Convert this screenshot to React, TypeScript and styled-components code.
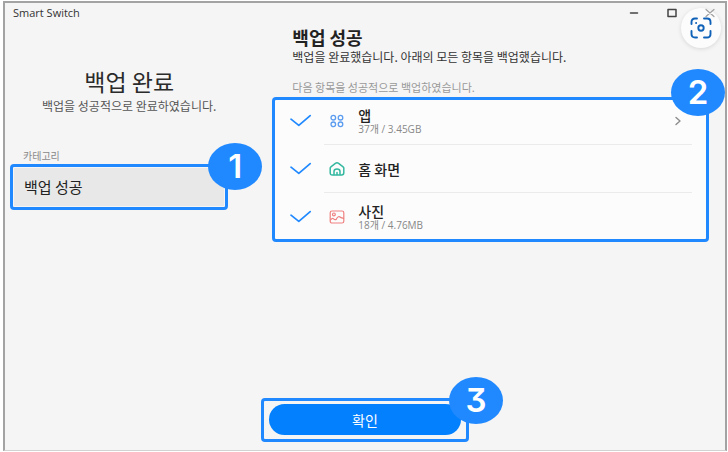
import React from "react";
import styled, { createGlobalStyle, css } from "styled-components";

const BLUE = "#2189ff";

const GlobalStyle = createGlobalStyle`
  * { box-sizing: border-box; }
  body {
    margin: 0;
    background: #ffffff;
    font-family: "Noto Sans CJK KR", sans-serif;
    color: #222222;
  }
  button, input { font-family: inherit; margin: 0; }
  h1, h2, p, ul { margin: 0; padding: 0; }
`;

const Window = styled.div`
  position: relative;
  display: flex;
  flex-direction: column;
  min-height: calc(100vh - 2px);
  margin: 1px 1px 0 3px;
  background: #f5f5f5;
  border: solid #a3a3a3;
  border-width: 2px 2px 1px;
  border-bottom-color: #d2d2d2;
`;

const TitleBar = styled.header`
  position: relative;
  z-index: 1;
  display: flex;
  align-items: center;
  justify-content: space-between;
  height: 20px;
  padding: 0 8px;
  font-family: "Open Sans", sans-serif;
  font-size: 11px;
  line-height: 20px;
  color: #333333;
`;

const WindowControls = styled.div`
  display: flex;
  gap: 23px;
`;

const ControlButton = styled.button<{ $dim?: boolean }>`
  display: flex;
  align-items: center;
  justify-content: center;
  width: 15px;
  height: 20px;
  padding: 0;
  border: 0;
  background: none;
  color: ${(p) => (p.$dim ? "#a0a0a0" : "#444444")};
`;

const CaptureButton = styled.button`
  position: absolute;
  top: 5px;
  right: 4px;
  display: flex;
  align-items: center;
  justify-content: center;
  width: 40px;
  height: 40px;
  padding: 0;
  border: 0;
  border-radius: 50%;
  background: #fcfcfc;
  box-shadow: 0 1px 4px rgba(0, 0, 0, 0.12);
  color: #0f62b8;
`;

const Content = styled.div`
  display: grid;
  grid-template-columns: minmax(0, 1fr) minmax(0, 2fr);
  column-gap: 44px;
  flex: 1;
  padding: 0 16px 0 5px;
`;

const Sidebar = styled.aside`
  padding-top: 41px;
`;

const PageTitle = styled.h1`
  margin-left: 20px;
  font-size: 23px;
  line-height: 34px;
  font-weight: 400;
  text-align: center;
  color: #2b2b2b;
`;

const PageNote = styled.p`
  margin-left: 20px;
  font-size: 12px;
  line-height: 16px;
  text-align: center;
  white-space: nowrap;
  color: #555555;
`;

const CategoryLabel = styled.p`
  margin: 34px 0 0 13px;
  font-size: 10px;
  line-height: 16px;
  color: #888888;
`;

const highlight = css`
  position: relative;
  &::after {
    content: "";
    position: absolute;
    inset: 0;
    border: 3px solid ${BLUE};
    border-radius: 4px;
    pointer-events: none;
  }
`;

const CategoryFrame = styled.div`
  ${highlight}
  padding: 4px;
`;

const CategoryButton = styled.button`
  display: block;
  width: 100%;
  height: 38px;
  padding: 0 10px;
  border: 0;
  background: #e8e8e8;
  font-size: 15px;
  line-height: 36px;
  text-align: left;
  color: #222222;
`;

const Badge = styled.span<{ $corner: "low" | "high" }>`
  position: absolute;
  z-index: 1;
  top: ${(p) => (p.$corner === "low" ? "-21px" : "-28px")};
  right: ${(p) => (p.$corner === "low" ? "-34px" : "-16px")};
  width: 54px;
  height: 47px;
  border-radius: 50%;
  background: ${BLUE};
  color: #ffffff;
  font-family: Inter, sans-serif;
  font-feature-settings: "cv09" 1;
  font-size: 33px;
  line-height: 47px;
  font-weight: 600;
  text-align: center;
`;

const Main = styled.main`
  padding-top: 2px;
`;

const SectionTitle = styled.h2`
  margin-left: 20px;
  font-size: 18px;
  line-height: 24px;
  font-weight: 700;
`;

const SectionText = styled.p<{ $muted?: boolean }>`
  margin: ${(p) => (p.$muted ? "14px 0 2px 20px" : "0 0 0 20px")};
  font-size: ${(p) => (p.$muted ? "11px" : "12px")};
  line-height: 16px;
  color: ${(p) => (p.$muted ? "#999999" : "#333333")};
`;

const ItemCard = styled.div`
  ${highlight}
  padding: 0 17px 1px;
  border-radius: 4px;
  background: #fcfcfc;
`;

const ItemList = styled.ul`
  list-style: none;
`;

const Item = styled.li`
  display: flex;
  align-items: center;
  gap: 12px;
`;

const Tick = styled.label`
  display: grid;
  width: 23px;
  height: 18px;
  > * { grid-area: 1 / 1; }
`;

const TickInput = styled.input`
  width: 100%;
  height: 100%;
  opacity: 0;
  &:not(:checked) + svg { visibility: hidden; }
`;

const ItemBody = styled.div`
  display: flex;
  align-items: center;
  flex: 1;
  gap: 13px;
  height: 48px;
  padding: 0 10px 0 5px;
  ${Item}:not(:last-child) & { border-bottom: 1px solid #ebebeb; }
`;

const ItemText = styled.div`
  flex: 1;
`;

const ItemName = styled.p`
  font-size: 14px;
  line-height: 16px;
  font-weight: 500;
`;

const ItemDetail = styled.p`
  font-family: "Open Sans", "Noto Sans CJK KR", sans-serif;
  font-size: 10px;
  line-height: 12px;
  color: #888888;
`;

const OpenButton = styled.button`
  display: flex;
  padding: 0;
  border: 0;
  background: none;
  color: #8c8c8c;
`;

const Footer = styled.footer`
  display: flex;
  justify-content: center;
  padding: 0 0 8px;
`;

const ConfirmFrame = styled.div`
  ${highlight}
  width: 208px;
  padding: 6px 8px 7px;
`;

const ConfirmButton = styled.button`
  display: block;
  width: 100%;
  height: 31px;
  padding: 0;
  border: 0;
  border-radius: 16px;
  background: #0380fe;
  color: #ffffff;
  font-size: 14px;
  line-height: 30px;
`;

const Stroke = ({ width, height, weight = 1, color = "currentColor", children }: {
  width: number;
  height: number;
  weight?: number;
  color?: string;
  children: React.ReactNode;
}) => (
  <svg
    width={width}
    height={height}
    viewBox={`0 0 ${width} ${height}`}
    fill="none"
    stroke={color}
    strokeWidth={weight}
    strokeLinecap="round"
    strokeLinejoin="round"
    aria-hidden="true"
  >
    {children}
  </svg>
);

const AppsIcon = () => (
  <Stroke width={16} height={16} weight={1.3} color="#5b9cf0">
    <circle cx="4.3" cy="4.7" r="2.3" />
    <circle cx="11.5" cy="4.7" r="2.3" />
    <circle cx="4.3" cy="11.3" r="2.3" />
    <circle cx="11.5" cy="11.3" r="2.3" />
  </Stroke>
);

const HomeIcon = () => (
  <Stroke width={16} height={16} weight={1.5} color="#35b8a0">
    <path d="M1.2 7 Q1.2 6.4 2.2 5.6 L6.4 2.4 Q8 1.3 9.6 2.4 L13.8 5.6 Q14.8 6.4 14.8 7 V11.8 Q14.8 14 12.6 14 H3.4 Q1.2 14 1.2 11.8 Z" />
    <path d="M5 13.6 V10.4 Q5 7.9 8 7.9 Q11 7.9 11 10.4 V13.6 M8 11.5 V13.6" />
  </Stroke>
);

const PhotoIcon = () => (
  <Stroke width={16} height={16} weight={1.2} color="#ef8080">
    <rect x="1.2" y="2" width="13.6" height="12" rx="1.8" />
    <circle cx="4.9" cy="5.4" r="1.4" />
    <path d="M1.5 11 Q3.4 8.6 4.6 9.8 T7.2 10.4 Q9.3 6.7 10.5 7.8 T14.5 9.3" />
  </Stroke>
);

const items = [
  { name: "앱", detail: "37개 / 3.45GB", icon: <AppsIcon />, opens: true },
  { name: "홈 화면", icon: <HomeIcon /> },
  { name: "사진", detail: "18개 / 4.76MB", icon: <PhotoIcon /> },
];

export default function App() {
  return (
    <>
      <GlobalStyle />
      <Window>
        <TitleBar>
          <span>Smart Switch</span>
          <WindowControls>
            <ControlButton aria-label="최소화">
              <Stroke width={10} height={10} weight={1.5}><path d="M1.5 5 H8.5" /></Stroke>
            </ControlButton>
            <ControlButton aria-label="최대화">
              <Stroke width={10} height={10} weight={1.5}><rect x="1" y="1.5" width="8" height="7" /></Stroke>
            </ControlButton>
            <ControlButton aria-label="닫기" $dim>
              <Stroke width={10} height={10} weight={1.2}><path d="M1 1.5 L9 8.5 M9 1.5 L1 8.5" /></Stroke>
            </ControlButton>
          </WindowControls>
        </TitleBar>
        <Content>
          <Sidebar>
            <PageTitle>백업 완료</PageTitle>
            <PageNote>백업을 성공적으로 완료하였습니다.</PageNote>
            <CategoryLabel>카테고리</CategoryLabel>
            <CategoryFrame>
              <CategoryButton>백업 성공</CategoryButton>
              <Badge $corner="low">1</Badge>
            </CategoryFrame>
          </Sidebar>
          <Main>
            <SectionTitle>백업 성공</SectionTitle>
            <SectionText>백업을 완료했습니다. 아래의 모든 항목을 백업했습니다.</SectionText>
            <SectionText $muted>다음 항목을 성공적으로 백업하였습니다.</SectionText>
            <ItemCard>
              <ItemList>
                {items.map((item) => (
                  <Item key={item.name}>
                    <Tick>
                      <TickInput type="checkbox" defaultChecked aria-label={item.name} />
                      <Stroke width={23} height={16} weight={1.7} color={BLUE}>
                        <path d="M2 7.2 L9.8 13.4 L21.2 3.6" />
                      </Stroke>
                    </Tick>
                    <ItemBody>
                      {item.icon}
                      <ItemText>
                        <ItemName>{item.name}</ItemName>
                        {item.detail && <ItemDetail>{item.detail}</ItemDetail>}
                      </ItemText>
                      {item.opens && (
                        <OpenButton aria-label={`${item.name} 열기`}>
                          <Stroke width={8} height={10} weight={1.4}><path d="M2 1.5 L6 5 L2 8.5" /></Stroke>
                        </OpenButton>
                      )}
                    </ItemBody>
                  </Item>
                ))}
              </ItemList>
              <Badge $corner="high">2</Badge>
            </ItemCard>
          </Main>
        </Content>
        <Footer>
          <ConfirmFrame>
            <ConfirmButton>확인</ConfirmButton>
            <Badge $corner="low">3</Badge>
          </ConfirmFrame>
        </Footer>
        <CaptureButton aria-label="화면 캡처">
          <Stroke width={22} height={22} weight={1.9}>
            <path d="M1.5 7 V5 Q1.5 1.5 5 1.5 H7 M14 1.5 H17 Q20.5 1.5 20.5 5 V7 M20.5 14 V17 Q20.5 20.5 17 20.5 H14 M7 20.5 H5 Q1.5 20.5 1.5 17 V14" />
            <circle cx="11" cy="11" r="2.7" />
            <circle cx="6" cy="6" r="0.5" fill="currentColor" strokeWidth="1" />
          </Stroke>
        </CaptureButton>
      </Window>
    </>
  );
}
